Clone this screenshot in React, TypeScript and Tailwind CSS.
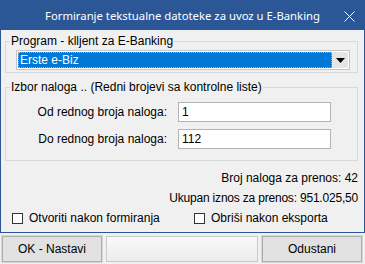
import React from 'react';

const font = { fontFamily: '"Liberation Sans", Arial, sans-serif' };

const Checkbox: React.FC<{ label: string; className?: string }> = ({ label, className }) => (
  <label className={`flex items-center gap-[6px] ${className ?? ''}`}>
    <span className="w-[11px] h-[11px] border border-[#333] bg-white" />
    <span>{label}</span>
  </label>
);

const Field: React.FC<{ label: string; value: string }> = ({ label, value }) => (
  <div className="flex items-center h-[20px]">
    <span className="w-[172px] text-right pr-[11px]">{label}</span>
    <div className="w-[153px] h-[20px] border border-[#b4b4b4] bg-white px-[3px] leading-[18px]">{value}</div>
  </div>
);

export default function App() {
  return (
    <div className="w-[365px] h-[264px] bg-[#f0f0f0] flex flex-col text-[12px] text-black" style={font}>
      {/* title bar */}
      <div className="h-[30px] bg-[#2b5797] flex items-center relative text-white">
        <div className="flex-1 text-center pt-[2px] text-[11.3px]" style={{ fontFamily: '"Noto Sans", sans-serif' }}>
          Formiranje tekstualne datoteke za uvoz u E-Banking
        </div>
        <svg className="absolute right-[10px] top-[11px]" width="11" height="11" viewBox="0 0 11 11">
          <path d="M0.5 0.5 L10.5 10.5 M10.5 0.5 L0.5 10.5" stroke="white" strokeWidth="1" />
        </svg>
      </div>

      {/* body */}
      <div className="h-[203px] border-x border-b border-[#2b5797] px-[4px] pt-[4px]">
        <fieldset className="border border-[#d8d8d8] w-[353px] h-[39px]">
          <legend className="ml-[4px] px-[1px] leading-[15px]">Program - klljent za E-Banking</legend>
          <div className="ml-[10px] mt-[1px] w-[334px] h-[20px] border border-[#c4c4c4] bg-white flex p-px">
            <div className="flex-1 bg-[#0078d7] text-white border border-dotted border-[#f0a030] leading-[14px] pl-px">
              Erste e-Biz
            </div>
            <div className="w-[16px] bg-[#e5e5e5] flex items-center justify-center">
              <svg width="9" height="5" viewBox="0 0 9 5"><path d="M0 0 H9 L4.5 5 Z" fill="#000" /></svg>
            </div>
          </div>
        </fieldset>

        <fieldset className="border border-[#d8d8d8] w-[353px] h-[81px] mt-[7px]">
          <legend className="ml-[4px] px-[1px] leading-[15px]">Izbor naloga .. (Redni brojevi sa kontrolne liste)</legend>
          <div className="flex flex-col gap-[7px] mt-[7px]">
            <Field label="Od rednog broja naloga:" value="1" />
            <Field label="Do rednog broja naloga:" value="112" />
          </div>
        </fieldset>

        <div className="flex flex-col items-end pr-[2px] mt-[10px] gap-[5px] leading-[15px]">
          <div>Broj naloga za prenos: 42</div>
          <div className="tracking-[-0.2px]">Ukupan iznos za prenos: 951.025,50</div>
        </div>
        <div className="flex items-center mt-[5px] pl-[7px] leading-[15px]">
          <Checkbox label="Otvoriti nakon formiranja" className="w-[182px]" />
          <Checkbox label="Obriši nakon eksporta" />
        </div>
      </div>

      {/* buttons */}
      <div className="flex items-start gap-[4px] px-[2px] pt-[3px]">
        <button className="w-[100px] h-[26px] bg-[#e1e1e1] border border-[#adadad] shadow-[0_0_0_1px_#d6d6d6]">OK - Nastavi</button>
        <div className="w-[152px] h-[26px] border border-[#cacaca] bg-gradient-to-b from-[#f9f9f9] to-[#ececec]" />
        <button className="w-[100px] h-[26px] bg-[#e1e1e1] border border-[#adadad] shadow-[0_0_0_1px_#d6d6d6]">Odustani</button>
      </div>
    </div>
  );
}
